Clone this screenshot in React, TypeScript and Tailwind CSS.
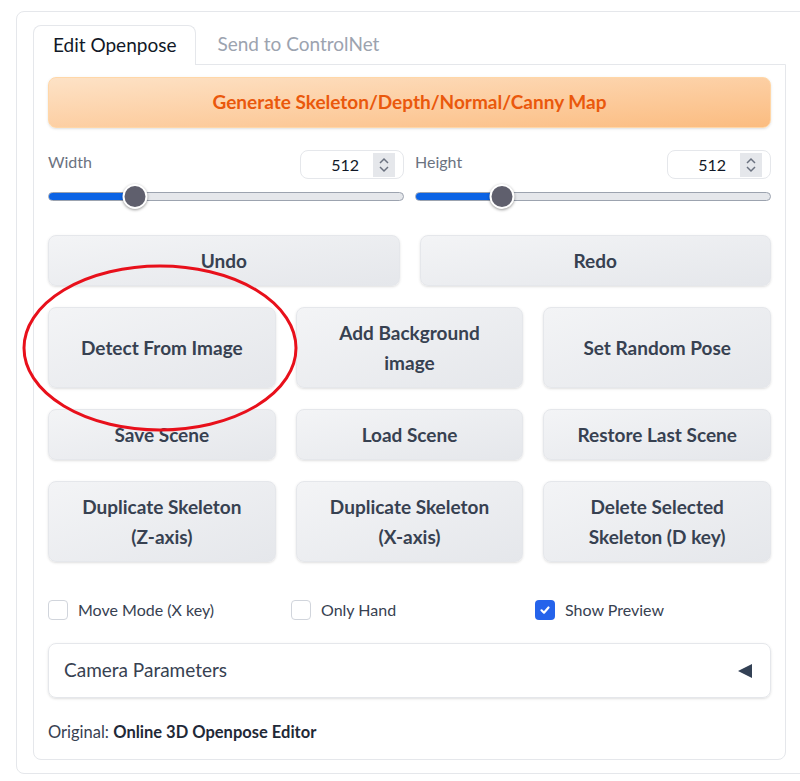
import React from "react";

const btn =
  "rounded-lg border border-gray-200 bg-gradient-to-br from-[#f3f4f6] to-[#e5e7eb] text-[#374151] font-bold text-[19px] leading-[30px] shadow-sm flex items-center justify-center text-center";

function NumberBox({ value }: { value: number }) {
  return (
    <div className="w-[104px] h-[29px] rounded-lg border border-gray-200 bg-white flex items-center justify-end pr-[8px] gap-[14px] text-[16px] text-[#111827]">
      <span>{value}</span>
      <span className="w-[22px] h-[24px] bg-[#e5e7eb] flex flex-col items-center justify-center text-[#6b7280]">
        <svg width="12" height="18" viewBox="0 0 12 18" fill="none" stroke="currentColor" strokeWidth="1.5">
          <path d="M2 7 L6 3 L10 7" />
          <path d="M2 11 L6 15 L10 11" />
        </svg>
      </span>
    </div>
  );
}

function Slider({ label, value }: { label: string; value: number }) {
  return (
    <div className="flex flex-col">
      <div className="flex items-start justify-between">
        <span className="text-[16px] text-[#6b7280]">{label}</span>
        <NumberBox value={value} />
      </div>
      <div className="relative h-[22px] mt-[6px] flex items-center">
        <div className="w-full h-[9px] rounded-full border border-[#9ca3af] bg-[#e5e7eb] overflow-hidden">
          <div className="h-full w-[24.5%] bg-[#0b63e5]" />
        </div>
        <div className="absolute left-[24.5%] -translate-x-1/2 w-[25px] h-[25px] rounded-full bg-[#5f5f6d] border-2 border-white shadow-[0_1px_3px_rgba(0,0,0,0.4)]" />
      </div>
    </div>
  );
}

function Check({ label, checked }: { label: string; checked?: boolean }) {
  return (
    <label className="flex items-center gap-[10px] text-[16px] text-[#374151]">
      {checked ? (
        <span className="w-[20px] h-[20px] rounded-[4px] bg-[#2563eb] flex items-center justify-center">
          <svg width="12" height="12" viewBox="0 0 12 12" fill="none" stroke="white" strokeWidth="2.2" strokeLinecap="round" strokeLinejoin="round">
            <path d="M2.5 6.3 L5 8.7 L9.5 3.5" />
          </svg>
        </span>
      ) : (
        <span className="w-[20px] h-[20px] rounded-[4px] border border-gray-300 bg-white" />
      )}
      {label}
    </label>
  );
}

export default function App() {
  return (
    <div className="bg-white min-h-[781px] pt-[11px] pl-[16px] font-['Source_Sans_Pro','Lato',sans-serif] relative overflow-hidden">
      <div className="w-[800px] h-[763px] border border-gray-200 rounded-lg pt-[12px] pl-[16px]">
        <div className="flex items-end">
          <div className="h-[40px] px-[19px] border border-gray-200 border-b-0 rounded-t-lg bg-white flex items-center text-[19px] text-[#111827] relative z-10 -mb-px">
            Edit Openpose
          </div>
          <div className="h-[40px] px-[21px] flex items-center text-[19px] text-[#9ca3af]">Send to ControlNet</div>
        </div>
        <div className="w-[753px] h-[696px] border border-gray-200 rounded-b-lg px-[14px] pt-[12px]">
          <button className="w-full h-[51px] rounded-lg border border-orange-200 bg-gradient-to-br from-[#fde2c6] to-[#fbbc80] text-[#ea580c] font-bold text-[19px] shadow-sm">
            Generate Skeleton/Depth/Normal/Canny Map
          </button>

          <div className="grid grid-cols-2 gap-[11px] mt-[22px]">
            <Slider label="Width" value={512} />
            <Slider label="Height" value={512} />
          </div>

          <div className="grid grid-cols-2 gap-[20px] mt-[28px]">
            <div className={`${btn} h-[51px]`}>Undo</div>
            <div className={`${btn} h-[51px]`}>Redo</div>
          </div>

          <div className="grid grid-cols-3 gap-x-[20px] gap-y-[21px] mt-[21px]">
            <div className={`${btn} h-[81px]`}>Detect From Image</div>
            <div className={`${btn} h-[81px] px-6`}>Add Background image</div>
            <div className={`${btn} h-[81px]`}>Set Random Pose</div>
            <div className={`${btn} h-[51px]`}>Save Scene</div>
            <div className={`${btn} h-[51px]`}>Load Scene</div>
            <div className={`${btn} h-[51px]`}>Restore Last Scene</div>
            <div className={`${btn} h-[81px] px-6`}>Duplicate Skeleton (Z-axis)</div>
            <div className={`${btn} h-[81px] px-6`}>Duplicate Skeleton (X-axis)</div>
            <div className={`${btn} h-[81px] px-10`}>Delete Selected Skeleton (D key)</div>
          </div>

          <div className="grid grid-cols-[243px_244px_1fr] mt-[36px]">
            <Check label="Move Mode (X key)" />
            <Check label="Only Hand" />
            <Check label="Show Preview" checked />
          </div>

          <div className="mt-[21px] h-[55px] rounded-lg border border-gray-200 shadow-sm flex items-center justify-between pl-[15px] pr-[18px]">
            <span className="text-[19px] text-[#374151]">Camera Parameters</span>
            <svg width="14" height="14" viewBox="0 0 14 14" className="text-[#334155]">
              <path d="M0 7 L14 0 L14 14 Z" fill="currentColor" />
            </svg>
          </div>

          <p className="mt-[22px] text-[16.5px] text-[#374151]">
            Original: <span className="font-bold text-[#1f2937]">Online 3D Openpose Editor</span>
          </p>
        </div>
      </div>

      <svg className="absolute left-0 top-0 pointer-events-none" width="800" height="781">
        <ellipse cx="160" cy="348" rx="136" ry="82" fill="none" stroke="#e8101b" strokeWidth="3" />
      </svg>
    </div>
  );
}
